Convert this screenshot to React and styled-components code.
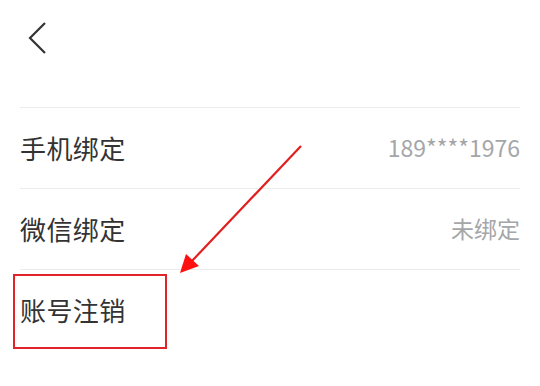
import React from "react"
import styled, { createGlobalStyle } from "styled-components"

const GlobalStyle = createGlobalStyle`
    html, body {
        margin: 0;
        padding: 0;
        background: #ffffff;
    }
    body {
        font-family: "Noto Sans CJK SC", "Noto Sans", sans-serif;
        color: #333333;
    }
`

const rows = [
    { label: "手机绑定", value: "189****1976" },
    { label: "微信绑定", value: "未绑定" },
    { label: "账号注销", value: "" },
]

export default function App() {
    return (
        <Page>
            <GlobalStyle />
            <Header>
                <BackButton aria-label="返回">
                    <svg width="22" height="34" viewBox="0 0 22 34">
                        <path d="M18 2 L3 17 L18 32" fill="none" stroke="#333" strokeWidth="2.2" />
                    </svg>
                </BackButton>
            </Header>
            <List>
                {rows.map((row) => (
                    <Row key={row.label}>
                        <Label>{row.label}</Label>
                        {row.value && <Value>{row.value}</Value>}
                    </Row>
                ))}
            </List>
            <Highlight />
            <Arrow width="130" height="130" viewBox="0 0 130 130">
                <line x1="124" y1="2" x2="14" y2="118" stroke="#e02020" strokeWidth="2.2" />
                <polygon points="3,129 9,110 22,122" fill="#ff1010" />
            </Arrow>
        </Page>
    )
}

const Page = styled.div`
    position: relative;
    width: 540px;
    height: 386px;
    padding: 0 20px;
    box-sizing: border-box;
    overflow: hidden;
`

const Header = styled.div`
    height: 107px;
    display: flex;
    align-items: flex-start;
    padding-top: 21px;
    box-sizing: border-box;
`

const BackButton = styled.div`
    width: 30px;
    height: 34px;
    display: flex;
    align-items: center;
    padding-left: 7px;
`

const List = styled.div`
    display: flex;
    flex-direction: column;
`

const Row = styled.div`
    height: 81px;
    box-sizing: border-box;
    border-top: 1px solid #ececec;
    padding-bottom: 1px;
    display: flex;
    align-items: center;
    justify-content: space-between;
`

const Label = styled.span`
    font-size: 26px;
    line-height: 1.2;
    color: #333333;
    letter-spacing: 0.4px;
`

const Value = styled.span`
    font-size: 23px;
    line-height: 1.2;
    color: #a4a6a8;
`

const Highlight = styled.div`
    position: absolute;
    left: 13px;
    top: 274px;
    width: 154px;
    height: 75px;
    border: 2px solid #e0242a;
    box-sizing: border-box;
`

const Arrow = styled.svg`
    position: absolute;
    left: 177px;
    top: 144px;
`
